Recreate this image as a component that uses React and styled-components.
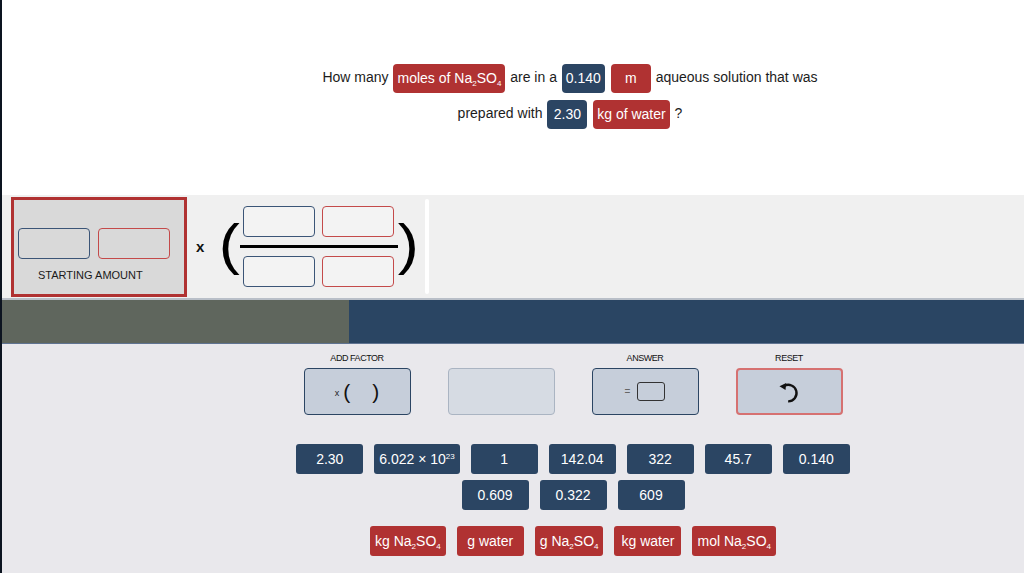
import styled, { createGlobalStyle } from 'styled-components';

const NAVY = '#2b4563';
const RED = '#b03232';

const GlobalStyle = createGlobalStyle`
  html, body {
    margin: 0;
    padding: 0;
    background: #e9e8ec;
    font-family: 'Liberation Sans', Arial, sans-serif;
  }
  * { box-sizing: border-box; }
`;

const Page = styled.div`
  min-height: 573px;
  border-left: 2px solid #0c1420;
  background: #e9e8ec;
`;

const Header = styled.div`
  height: 195px;
  background: #ffffff;
  padding: 59px 0 0 114px;
`;

const Question = styled.p`
  margin: 0;
  text-align: center;
  font-size: 14px;
  line-height: 36px;
  color: #1c1c1c;
`;

const Token = styled.span`
  display: inline-block;
  min-width: 40px;
  height: 29px;
  line-height: 29px;
  padding: 0 4px;
  margin: 0 1px;
  border-radius: 4px;
  text-align: center;
  vertical-align: middle;
  color: #fff;
  background: ${(p) => (p.$kind === 'unit' ? RED : NAVY)};
`;

const Sub = styled.sub`
  font-size: 8px;
  vertical-align: -3px;
  line-height: 0;
`;

const Sup = styled.sup`
  font-size: 8px;
  vertical-align: 5px;
  line-height: 0;
`;

/* ---------- workspace strip ---------- */

const Workspace = styled.div`
  height: 103px;
  background: #f0f0f0;
  display: flex;
  align-items: center;
  padding-left: 9px;
`;

const StartPanel = styled.div`
  width: 176px;
  height: 100px;
  margin-top: 1px;
  border: 3px solid ${RED};
  background: #d9d9d9;
  padding: 28px 0 0 4px;
  display: flex;
  flex-direction: column;
`;

const BoxRow = styled.div`
  display: flex;
  gap: ${(p) => p.$gap || 7}px;
`;

const Slot = styled.div`
  width: 72px;
  height: 31px;
  border-radius: 4px;
  border: 1px solid ${(p) => (p.$kind === 'unit' ? '#c44a4a' : '#3b5577')};
  background: ${(p) => p.$bg || 'transparent'};
`;

const PanelLabel = styled.div`
  margin: 10px 0 0 20px;
  font-size: 11px;
  color: #1a1a1a;
`;

const Times = styled.span`
  margin: 0 16px 0 9px;
  font-size: 15px;
  font-weight: bold;
  color: #111;
`;

const Paren = styled.span`
  font-size: 55px;
  line-height: 1;
  color: #000;
  margin-top: -4px;
  transform: scaleX(1.15);
`;

const Fraction = styled.div`
  display: flex;
  flex-direction: column;
  align-items: center;
  margin: 0 1px;
`;

const FractionBar = styled.div`
  width: 158px;
  height: 3px;
  background: #000;
  margin: 8px 0 8px;
`;

const Divider = styled.div`
  width: 4px;
  height: 95px;
  margin-left: 8px;
  background: #ffffff;
  border-radius: 2px;
`;

/* ---------- progress band ---------- */

const Band = styled.div`
  height: 46px;
  border-top: 2px solid #b9bfc8;
  border-bottom: 1px solid #5f7391;
  background: #2a4563;
  display: flex;
`;

const BandFill = styled.div`
  width: ${(p) => p.$width}px;
  background: #5f665d;
`;

/* ---------- controls ---------- */

const Controls = styled.div`
  padding: 9px 0 0 120px;
  display: flex;
  flex-direction: column;
  align-items: center;
`;

const ToolRow = styled.div`
  display: grid;
  grid-template-columns: repeat(4, 107px);
  column-gap: 37px;
`;

const Tool = styled.div`
  display: flex;
  flex-direction: column;
  align-items: center;
`;

const ToolLabel = styled.div`
  height: 15px;
  font-size: 9px;
  letter-spacing: -0.45px;
  color: #111;
  line-height: 10px;
`;

const ToolButton = styled.div`
  width: 107px;
  height: 47px;
  border-radius: 4px;
  display: flex;
  align-items: center;
  justify-content: center;
  background: ${(p) => (p.$disabled ? '#d6dbe3' : '#c6ceda')};
  border: ${(p) =>
    p.$danger ? '2px solid #d67171' : p.$disabled ? '1px solid #aab4c2' : `1px solid ${NAVY}`};
`;

const SmallX = styled.span`
  font-size: 9px;
  color: #222;
  margin-right: 4px;
  margin-top: 3px;
`;

const ToolParen = styled.span`
  font-size: 21px;
  color: #111;
  margin: 0 ${(p) => (p.$open ? '22px' : '0')} 0 0;
`;

const Equals = styled.span`
  font-size: 10px;
  color: #666;
  margin-right: 7px;
`;

const AnswerBox = styled.span`
  width: 28px;
  height: 19px;
  border: 1.5px solid #333;
  border-radius: 3px;
`;

const Chips = styled.div`
  margin-top: 29px;
  display: flex;
  flex-direction: column;
  align-items: center;
  gap: 6px;
`;

const ChipRow = styled.div`
  display: flex;
  gap: 11px;
  margin-top: ${(p) => p.$top || 0}px;
`;

const Chip = styled.div`
  min-width: 67px;
  height: 30px;
  padding: 0 5px;
  border-radius: 3px;
  display: flex;
  align-items: center;
  justify-content: center;
  font-size: 14px;
  color: #fff;
  background: ${(p) => (p.$kind === 'unit' ? RED : NAVY)};
`;

const ChipText = styled.span`
  white-space: nowrap;
`;

const Na2SO4 = () => (
  <>
    Na<Sub>2</Sub>SO<Sub>4</Sub>
  </>
);

const UndoIcon = () => (
  <svg width="26" height="26" viewBox="0 0 24 24">
    <path d="M7.6 6.4 A7.6 7.6 0 1 1 11.2 20.6" fill="none" stroke="#111" strokeWidth="2.2" />
    <path d="M3.2 6.6 L9.4 3.6 L8.8 10.2 Z" fill="#111" />
  </svg>
);

const numbers = ['2.30', 'sci', '1', '142.04', '322', '45.7', '0.140'];
const numbers2 = ['0.609', '0.322', '609'];
const units = [
  <>kg <Na2SO4 /></>,
  'g water',
  <>g <Na2SO4 /></>,
  'kg water',
  <>mol <Na2SO4 /></>,
];

export default function App() {
  return (
    <Page>
      <GlobalStyle />
      <Header>
        <Question>
          How many <Token $kind='unit'>moles of <Na2SO4 /></Token> are in a{' '}
          <Token>0.140</Token> <Token $kind='unit'>m</Token> aqueous solution that was
          <br />
          prepared with <Token>2.30</Token> <Token $kind='unit'>kg of water</Token> ?
        </Question>
      </Header>

      <Workspace>
        <StartPanel>
          <BoxRow $gap={8}>
            <Slot />
            <Slot $kind='unit' />
          </BoxRow>
          <PanelLabel>STARTING AMOUNT</PanelLabel>
        </StartPanel>
        <Times>x</Times>
        <Paren>(</Paren>
        <Fraction>
          <BoxRow>
            <Slot $bg='#f3f3f3' />
            <Slot $kind='unit' $bg='#f3f3f3' />
          </BoxRow>
          <FractionBar />
          <BoxRow>
            <Slot $bg='#f3f3f3' />
            <Slot $kind='unit' $bg='#f3f3f3' />
          </BoxRow>
        </Fraction>
        <Paren>)</Paren>
        <Divider />
      </Workspace>

      <Band>
        <BandFill $width={347} />
      </Band>

      <Controls>
        <ToolRow>
          <Tool>
            <ToolLabel>ADD FACTOR</ToolLabel>
            <ToolButton>
              <SmallX>x</SmallX>
              <ToolParen $open>(</ToolParen>
              <ToolParen>)</ToolParen>
            </ToolButton>
          </Tool>
          <Tool>
            <ToolLabel />
            <ToolButton $disabled />
          </Tool>
          <Tool>
            <ToolLabel>ANSWER</ToolLabel>
            <ToolButton>
              <Equals>=</Equals>
              <AnswerBox />
            </ToolButton>
          </Tool>
          <Tool>
            <ToolLabel>RESET</ToolLabel>
            <ToolButton $danger>
              <UndoIcon />
            </ToolButton>
          </Tool>
        </ToolRow>

        <Chips>
          <ChipRow>
            {numbers.map((n) => (
              <Chip key={n}>
                <ChipText>
                  {n === 'sci' ? (
                    <>
                      6.022 × 10<Sup>23</Sup>
                    </>
                  ) : (
                    n
                  )}
                </ChipText>
              </Chip>
            ))}
          </ChipRow>
          <ChipRow>
            {numbers2.map((n) => (
              <Chip key={n}>
                <ChipText>{n}</ChipText>
              </Chip>
            ))}
          </ChipRow>
          <ChipRow $top={10}>
            {units.map((u, i) => (
              <Chip key={i} $kind='unit'>
                <ChipText>{u}</ChipText>
              </Chip>
            ))}
          </ChipRow>
        </Chips>
      </Controls>
    </Page>
  );
}
